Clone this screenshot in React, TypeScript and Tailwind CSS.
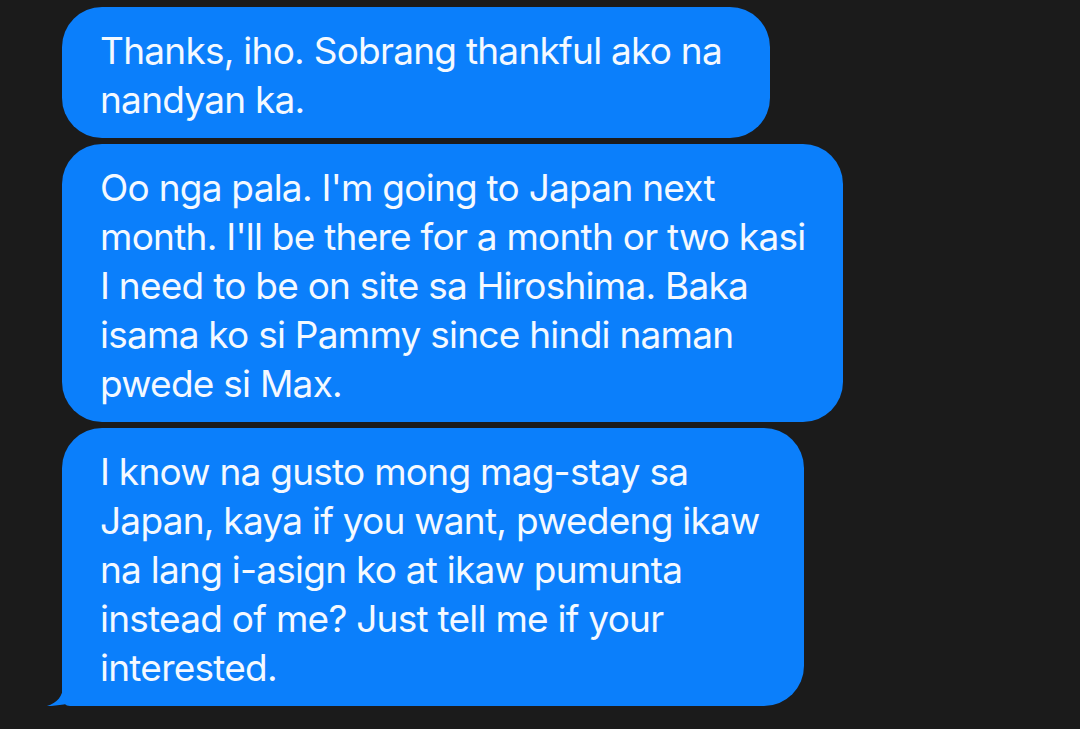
const messages: { lines: string[]; width: string; tail?: boolean }[] = [
  {
    lines: ["Thanks, iho. Sobrang thankful ako na", "nandyan ka."],
    width: "w-[708px]",
  },
  {
    lines: [
      "Oo nga pala. I'm going to Japan next",
      "month. I'll be there for a month or two kasi",
      "I need to be on site sa Hiroshima. Baka",
      "isama ko si Pammy since hindi naman",
      "pwede si Max.",
    ],
    width: "w-[781px]",
  },
  {
    lines: [
      "I know na gusto mong mag-stay sa",
      "Japan, kaya if you want, pwedeng ikaw",
      "na lang i-asign ko at ikaw pumunta",
      "instead of me? Just tell me if your",
      "interested.",
    ],
    width: "w-[742px]",
    tail: true,
  },
];

function Tail() {
  // bubble tail hanging off the bottom-left corner, drawn behind the text
  return (
    <svg
      aria-hidden
      className="absolute bottom-0 left-[-16px] h-[38px] w-[52px]"
      viewBox="0 0 52 38"
    >
      <path
        d="M17 0 L17 18 C17 28 11 35 1 38 C12 38 24 36 33 31 C38 36 44 38 52 38 L52 0 Z"
        fill="#0b7ffb"
      />
    </svg>
  );
}

export default function App() {
  return (
    <div className="min-h-[729px] w-[1080px] bg-[#1b1b1b] pl-[62px] pt-[7px] font-['Inter','Liberation_Sans',sans-serif]">
      <div className="flex flex-col gap-[6px]">
        {messages.map((m, i) => (
          <div
            key={i}
            className={`relative ${m.width} rounded-[40px] bg-[#0b7ffb] pb-[14px] pl-[38px] pt-[19px] text-[37px] leading-[49px] tracking-[-0.75px] text-[#f4f9ff] ${
              m.tail ? "rounded-bl-[8px]" : ""
            }`}
          >
            {m.tail ? <Tail /> : null}
            <div className="relative">
              {m.lines.map((l, j) => (
                <div key={j} className="whitespace-nowrap">
                  {l}
                </div>
              ))}
            </div>
          </div>
        ))}
      </div>
    </div>
  );
}
